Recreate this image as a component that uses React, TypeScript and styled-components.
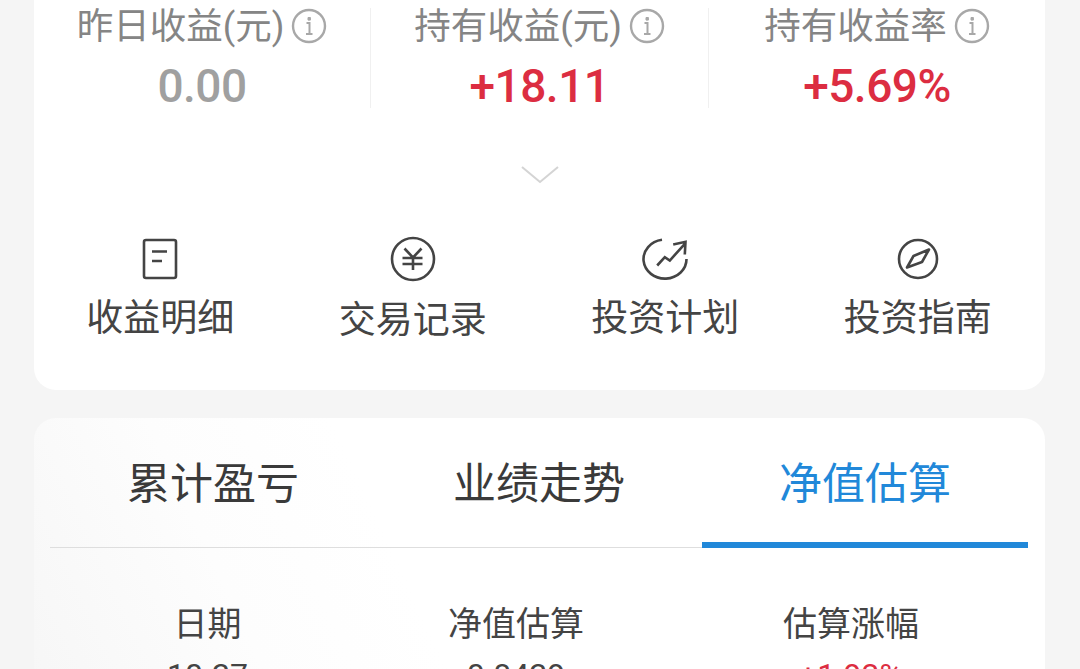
import styled, { createGlobalStyle } from 'styled-components';

const GlobalStyle = createGlobalStyle`
  html, body {
    margin: 0;
    padding: 0;
    height: 669px;
    overflow: hidden;
    background: #f5f5f5;
    font-family: "Roboto", "Noto Sans CJK SC", sans-serif;
  }
`;

const stats = [
  { label: '昨日收益(元)', value: '0.00', tone: 'muted' },
  { label: '持有收益(元)', value: '+18.11', tone: 'up' },
  { label: '持有收益率', value: '+5.69%', tone: 'up' },
];

const shortcuts = [
  { label: '收益明细', icon: <DetailIcon /> },
  { label: '交易记录', icon: <YenIcon />, low: true },
  { label: '投资计划', icon: <PlanIcon /> },
  { label: '投资指南', icon: <CompassIcon /> },
];

const tabs = ['累计盈亏', '业绩走势', '净值估算'];

function InfoIcon() {
  return (
    <svg width="36" height="36" viewBox="0 0 36 36" fill="none" stroke="#a8a8a8">
      <circle cx="18" cy="18" r="16" strokeWidth="2.4" />
      <path d="M15.5 15h3v11M15 26h6.5" strokeWidth="2" />
      <path d="M17 9.500h2.400v2.600H17z" fill="#a8a8a8" strokeWidth="1" />
    </svg>
  );
}

function DetailIcon() {
  return (
    <svg width="36" height="42" viewBox="0 0 36 42" fill="none" stroke="#444" strokeWidth="2.6">
      <rect x="2" y="2" width="32" height="38" rx="2" />
      <path d="M10 13.500h15M10 23h10" />
    </svg>
  );
}

function YenIcon() {
  return (
    <svg width="46" height="46" viewBox="0 0 46 46" fill="none" stroke="#444" strokeWidth="2.6">
      <circle cx="23" cy="23" r="21" />
      <path d="M14.500 12.500l8.500 9 8.500-9M12.500 22h20M12.500 28h20M23 21v13" />
    </svg>
  );
}

function PlanIcon() {
  return (
    <svg width="46" height="42" viewBox="0 0 46 42" fill="none" stroke="#444" strokeWidth="2.6">
      <path d="M20 1.800A21.500 19.500 0 1 0 44.500 21" />
      <path d="M15.200 27.500l7.600-8.300 5 3.300 15-16.700M31.200 6.500l12.300-2.700-.7 12.700" />
    </svg>
  );
}

function CompassIcon() {
  return (
    <svg width="42" height="42" viewBox="0 0 42 42" fill="none" stroke="#444" strokeWidth="2.6">
      <circle cx="21" cy="21" r="19" />
      <path d="M32 11.500L25 24 10 29.500 16.500 18z" strokeLinejoin="round" />
    </svg>
  );
}

export default function App() {
  return (
    <Page>
      <GlobalStyle />
      <SummaryCard>
        <StatRow>
          {stats.map((stat) => (
            <Stat key={stat.label}>
              <StatLabel>
                <StatText>{stat.label}</StatText>
                <InfoIcon />
              </StatLabel>
              <StatValue $tone={stat.tone}>{stat.value}</StatValue>
            </Stat>
          ))}
        </StatRow>

        <Expand>
          <svg width="38" height="18" viewBox="0 0 38 18" fill="none" stroke="#d4d4d4" strokeWidth="2">
            <path d="M1 1l18 15L37 1" />
          </svg>
        </Expand>

        <Shortcuts>
          {shortcuts.map((item) => (
            <Shortcut key={item.label}>
              <ShortcutIcon>{item.icon}</ShortcutIcon>
              <ShortcutLabel $low={item.low}>{item.label}</ShortcutLabel>
            </Shortcut>
          ))}
        </Shortcuts>
      </SummaryCard>

      <ChartCard>
        <Tabs>
          {tabs.map((tab, i) => (
            <Tab key={tab} $active={i === 2}>
              {tab}
            </Tab>
          ))}
        </Tabs>

        <Table>
          <HeadCell>日期</HeadCell>
          <HeadCell>净值估算</HeadCell>
          <HeadCell>估算涨幅</HeadCell>
          <BodyCell>10-27</BodyCell>
          <BodyCell>0.8429</BodyCell>
          <BodyCell $up>+1.93%</BodyCell>
        </Table>
      </ChartCard>
    </Page>
  );
}

const Page = styled.div`
  height: 669px;
  padding: 0 35px 0 34px;
  display: flex;
  flex-direction: column;
  gap: 28px;
  overflow: hidden;
`;

const SummaryCard = styled.section`
  flex: none;
  height: 390px;
  box-sizing: border-box;
  background: #fff;
  border-radius: 0 0 22px 22px;
  padding-top: 8px;
`;

const StatRow = styled.div`
  display: grid;
  grid-template-columns: 336px 338px 337px;
`;

const Stat = styled.div`
  height: 100px;
  display: flex;
  flex-direction: column;
  align-items: center;
  border-left: 1px solid #f0f0f0;

  &:first-child {
    border-left: none;
  }
`;

const StatLabel = styled.div`
  display: flex;
  align-items: center;
  gap: 7px;
  height: 36px;
  color: #858585;
  white-space: nowrap;
`;

const StatText = styled.span`
  font-size: 36.5px;
  padding-bottom: 5px;
`;

const StatValue = styled.div<{ $tone: string }>`
  margin-top: 19px;
  font-size: 46px;
  line-height: 46px;
  font-weight: 500;
  letter-spacing: -0.5px;
  color: ${(p) => (p.$tone === 'up' ? '#dc2d41' : '#a0a0a0')};
`;

const Expand = styled.div`
  display: flex;
  justify-content: center;
  margin-top: 58px;
  height: 18px;
`;

const Shortcuts = styled.div`
  display: grid;
  grid-template-columns: repeat(4, 252.5px);
  margin-top: 52px;
`;

const Shortcut = styled.div`
  display: flex;
  flex-direction: column;
  align-items: center;
  font-size: 37px;
  line-height: 50px;
  color: #444;
`;

const ShortcutIcon = styled.div`
  height: 46px;
  display: flex;
  align-items: center;
  justify-content: center;
  margin-bottom: 12px;
`;

const ShortcutLabel = styled.div<{ $low?: boolean }>`
  margin-top: ${(p) => (p.$low ? '2px' : '0')};
`;

const ChartCard = styled.section`
  flex: none;
  height: 300px;
  background: linear-gradient(65deg, #f6f6f6 0%, #fdfdfd 22%, #fff 38%);
  border-radius: 22px 22px 0 0;
  padding: 0 17px 0 16px;
`;

const Tabs = styled.div`
  display: grid;
  grid-template-columns: 326px 326px 326px;
  height: 129px;
  border-bottom: 1px solid #dedede;
`;

const Tab = styled.div<{ $active?: boolean }>`
  display: flex;
  justify-content: center;
  align-items: center;
  box-sizing: border-box;
  height: 130px;
  font-size: 43px;
  padding-bottom: ${(p) => (p.$active ? '0' : '6px')};
  color: ${(p) => (p.$active ? '#2188d9' : '#3a3a3a')};
  border-bottom: ${(p) => (p.$active ? '6px solid #2188d9' : 'none')};
`;

const Table = styled.div`
  display: grid;
  grid-template-columns: 315px 302px 368px;
  margin-top: 54px;
  text-align: center;
`;

const HeadCell = styled.div`
  font-size: 34px;
  line-height: 44px;
  color: #444;
`;

const BodyCell = styled.div<{ $up?: boolean }>`
  font-size: 32px;
  line-height: 40px;
  margin-top: 9px;
  color: ${(p) => (p.$up ? '#dc2d41' : '#444')};
`;
